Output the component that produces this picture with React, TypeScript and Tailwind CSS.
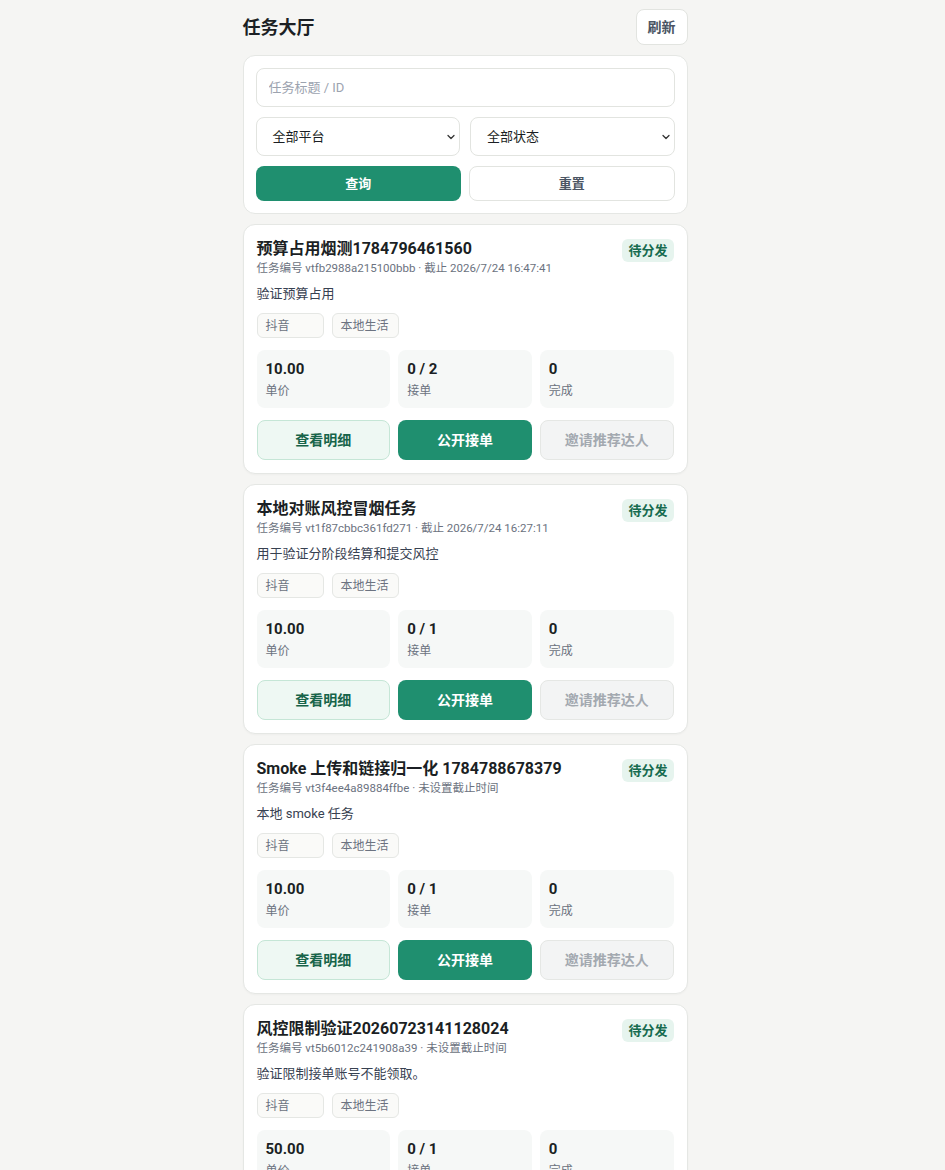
import { ChevronDown } from 'lucide-react'

interface Task {
  title: string
  id: string
  deadline: string
  desc: string
  price: string
  taken: string
  done: string
}

const tasks: Task[] = [
  { title: '预算占用烟测1784796461560', id: 'vtfb2988a215100bbb', deadline: '截止 2026/7/24 16:47:41', desc: '验证预算占用', price: '10.00', taken: '0 / 2', done: '0' },
  { title: '本地对账风控冒烟任务', id: 'vt1f87cbbc361fd271', deadline: '截止 2026/7/24 16:27:11', desc: '用于验证分阶段结算和提交风控', price: '10.00', taken: '0 / 1', done: '0' },
  { title: 'Smoke 上传和链接归一化 1784788678379', id: 'vt3f4ee4a89884ffbe', deadline: '未设置截止时间', desc: '本地 smoke 任务', price: '10.00', taken: '0 / 1', done: '0' },
  { title: '风控限制验证20260723141128024', id: 'vt5b6012c241908a39', deadline: '未设置截止时间', desc: '验证限制接单账号不能领取。', price: '50.00', taken: '0 / 1', done: '0' },
  { title: '本地对账风控冒烟任务', id: 'vt0a1c7e52d4b9f803', deadline: '未设置截止时间', desc: '用于验证分阶段结算和提交风控', price: '10.00', taken: '0 / 1', done: '0' },
]

function TaskCard({ task }: { task: Task }) {
  return (
    <div className="bg-white border border-[#e5e7e4] rounded-xl p-[13px] shadow-[0_1px_2px_rgba(0,0,0,0.03)]">
      {/* 标题行 */}
      <div className="flex items-start justify-between gap-3">
        <div className="min-w-0">
          <h2 className="text-[16px] leading-[22px] font-bold text-[#1b1f24]">{task.title}</h2>
          <p className="text-[11.5px] leading-[16px] text-[#6b7280]">
            任务编号 {task.id} · {task.deadline}
          </p>
        </div>
        <span className="shrink-0 mt-[1px] px-[6px] h-[23px] flex items-center rounded-md bg-[#e6f4ee] text-[#166b4f] text-[13px] font-bold">
          待分发
        </span>
      </div>

      <p className="mt-[9px] text-[13px] leading-[18px] text-[#374151]">{task.desc}</p>

      {/* 标签 */}
      <div className="mt-[10px] flex gap-2">
        {['抖音', '本地生活'].map((t) => (
          <span key={t} className="min-w-[67px] h-[25px] px-[8px] flex items-center rounded-md border border-[#e5e7e4] bg-[#fafaf8] text-[12px] text-[#6b7280]">
            {t}
          </span>
        ))}
      </div>

      {/* 统计 */}
      <div className="mt-[12px] grid grid-cols-3 gap-[8px]">
        {[
          { v: task.price, l: '单价' },
          { v: task.taken, l: '接单' },
          { v: task.done, l: '完成' },
        ].map((s) => (
          <div key={s.l} className="h-[58px] rounded-lg bg-[#f6f8f7] px-[9px] pt-[9px]">
            <div className="text-[15px] leading-[20px] font-bold text-[#1b1f24]">{s.v}</div>
            <div className="mt-[3px] text-[12px] leading-[18px] text-[#6b7280]">{s.l}</div>
          </div>
        ))}
      </div>

      {/* 操作 */}
      <div className="mt-[12px] grid grid-cols-3 gap-[8px]">
        <button className="h-[40px] rounded-lg border border-[#c5e6d6] bg-[#eef8f3] text-[14px] font-bold text-[#17644a]">
          查看明细
        </button>
        <button className="h-[40px] rounded-lg bg-[#1f8f6f] text-[14px] font-bold text-white">
          公开接单
        </button>
        <button className="h-[40px] rounded-lg border border-[#e5e7e4] bg-[#f3f4f4] text-[14px] font-bold text-[#a3a9b0]">
          邀请推荐达人
        </button>
      </div>
    </div>
  )
}

export default function App() {
  return (
    // 右侧留出滚动条宽度
    <div
      className="min-h-screen bg-[#f5f5f3] pr-[15px]"
      style={{ fontFamily: 'Roboto, "Noto Sans CJK SC", sans-serif' }}
    >
      <div className="max-w-[445px] mx-auto pb-6">
        {/* 头部 */}
        <div className="flex items-center justify-between pt-[9px] pb-[10px]">
          <h1 className="text-[18px] font-bold text-[#1b1f24]">任务大厅</h1>
          <button className="h-[36px] px-[11px] rounded-lg border border-[#e2e4e0] bg-white text-[14px] font-bold text-[#4b5563]">
            刷新
          </button>
        </div>

        {/* 筛选 */}
        <div className="bg-white border border-[#e5e7e4] rounded-xl p-[12px] flex flex-col gap-[10px]">
          <input
            placeholder="任务标题 / ID"
            className="h-[39px] rounded-lg border border-[#e2e4e0] px-[12px] text-[13px] outline-none placeholder:text-[#9ca3af]"
          />
          <div className="grid grid-cols-2 gap-[10px]">
            {['全部平台', '全部状态'].map((s) => (
              <div key={s} className="h-[39px] rounded-lg border border-[#e2e4e0] pl-[16px] pr-[2px] flex items-center justify-between text-[13px] text-[#1b1f24]">
                <span>{s}</span>
                <ChevronDown className="w-[12px] h-[12px] text-[#333]" strokeWidth={2.5} />
              </div>
            ))}
          </div>
          <div className="grid grid-cols-2 gap-[8px]">
            <button className="h-[35px] rounded-lg bg-[#1f8f6f] text-[13px] font-bold text-white">查询</button>
            <button className="h-[35px] rounded-lg border border-[#e2e4e0] bg-white text-[13px] font-bold text-[#4b5563]">重置</button>
          </div>
        </div>

        {/* 任务列表 */}
        <div className="mt-[10px] flex flex-col gap-[10px]">
          {tasks.map((t, i) => (
            <TaskCard key={i} task={t} />
          ))}
        </div>
      </div>
    </div>
  )
}
